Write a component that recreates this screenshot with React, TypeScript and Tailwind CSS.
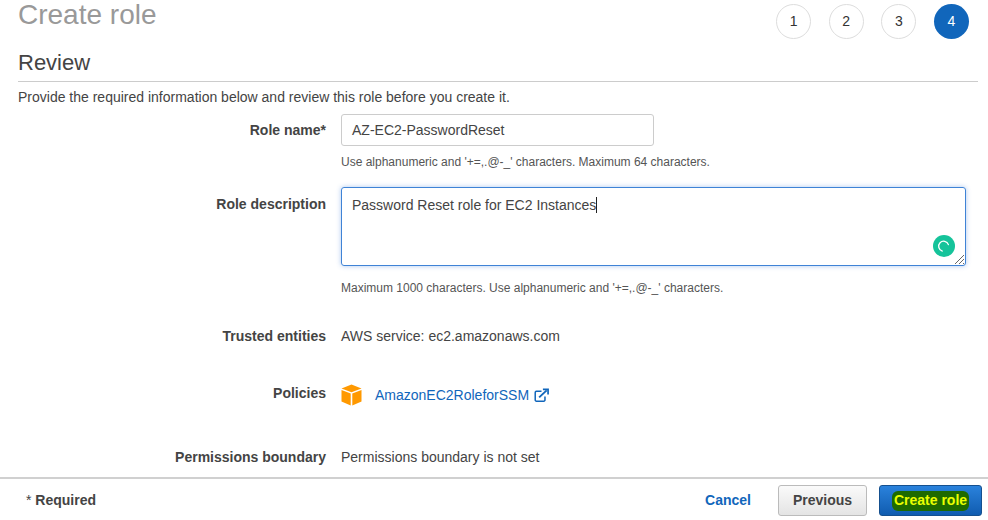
import React from 'react';

const Step = ({ n, active }: { n: number; active?: boolean }) => (
  <div
    className={
      active
        ? 'w-[35px] h-[35px] rounded-full bg-[#1166bb] text-white flex items-center justify-center text-[14px]'
        : 'w-[35px] h-[35px] rounded-full bg-white border border-[#dddddd] text-[#333333] flex items-center justify-center text-[14px]'
    }
  >
    {n}
  </div>
);

const Row = ({ label, className, labelClass, children }: { label: React.ReactNode; className?: string; labelClass?: string; children: React.ReactNode }) => (
  <div className={`flex items-start ${className ?? ''}`}>
    <div className={`w-[326px] shrink-0 text-right text-[14px] leading-[20px] font-bold text-[#444444] ${labelClass ?? ''}`}>{label}</div>
    <div className="ml-[15px] flex-1 min-w-0 text-[14px] leading-[20px] text-[#444444]">{children}</div>
  </div>
);

export default function App() {
  return (
    <div className="w-[988px] h-[520px] bg-white flex flex-col overflow-hidden font-['Liberation_Sans',Arial,sans-serif]">
      <main className="h-[477px] shrink-0 overflow-hidden">
        {/* title + wizard steps */}
        <div className="flex items-start justify-between pl-[18px] pr-[19px] pt-[4px] h-[46px]">
          <h1 className="text-[28px] leading-[28px] -mt-[3.3px] text-[#999999] font-normal">Create role</h1>
          <div className="flex gap-[17.67px]">
            <Step n={1} />
            <Step n={2} />
            <Step n={3} />
            <Step n={4} active />
          </div>
        </div>

        <div className="mx-[18px] mr-[10px] border-b border-[#cccccc] h-[36px] flex items-center">
          <h2 className="text-[22px] leading-[30px] -mt-[1px] text-[#444444] font-normal">Review</h2>
        </div>

        <p className="ml-[18px] mt-[6px] text-[14px] leading-[18px] text-[#444444]">
          Provide the required information below and review this role before you create it.
        </p>

        <Row label="Role name*" labelClass="pt-[6px]" className="mt-[8px]">
          <div className="w-[313px] h-[32px] border border-[#cccccc] rounded-[3px] pl-[10px] flex items-center text-[14px] text-[#444444]">
            AZ-EC2-PasswordReset
          </div>
          <div className="mt-[9px] text-[12px] leading-[14px] text-[#555555]">
            Use alphanumeric and '+=,.@-_' characters. Maximum 64 characters.
          </div>
        </Row>

        <Row label="Role description" labelClass="pt-[7px]" className="mt-[18px]">
          <div className="relative w-[625px] h-[79px] border border-[#3f83d6] rounded-[3px] shadow-[0_0_5px_rgba(70,130,220,0.45)] pl-[10px] pt-[7px] text-[14px] leading-[20px] text-[#444444]">
            Password Reset role for EC2 Instances
            <span className="inline-block w-px h-[16px] bg-[#222222] align-[-3px]" />
            <div className="absolute right-[10px] bottom-[8px] w-[22px] h-[22px] rounded-full bg-[#15c39a] flex items-center justify-center">
              <svg width="14" height="14" viewBox="0 0 14 14" fill="none">
                <path d="M3 10.500A5 5 0 1 1 11.500 8" stroke="#ffffff" strokeWidth="1.300" strokeLinecap="round" transform="rotate(-30 7 7)" />
              </svg>
            </div>
            <svg className="absolute right-0 bottom-0" width="11" height="11" viewBox="0 0 11 11" fill="none">
              <path d="M1 10L10 1M5 10L10 5M9 10L10 9" stroke="#666666" strokeWidth="1" />
            </svg>
          </div>
          <div className="mt-[15px] text-[12px] leading-[14px] text-[#555555]">
            Maximum 1000 characters. Use alphanumeric and '+=,.@-_' characters.
          </div>
        </Row>

        <Row label="Trusted entities" className="mt-[31px]">
          AWS service: ec2.amazonaws.com
        </Row>

        <Row label="Policies" className="mt-[37px]">
          <div className="flex items-center h-[24px]">
            <svg width="21" height="22" viewBox="0 0 21 22" className="shrink-0">
              <path d="M10.500 0.500L20.500 4.500L10.500 8.200L0.500 4.500Z" fill="#ff9900" />
              <path d="M0.500 6L9.700 9.500V21.500L0.500 17.500Z" fill="#ff9900" />
              <path d="M20.500 6L11.300 9.500V21.500L20.500 17.500Z" fill="#ff9900" />
            </svg>
            <a className="ml-[13px] text-[#1166bb]">AmazonEC2RoleforSSM</a>
            <svg className="ml-[5px]" width="15" height="15" viewBox="0 0 16 15" fill="none" stroke="#1166bb" strokeWidth="1.600">
              <path d="M8 3H2.500A1.200 1.200 0 0 0 1.300 4.200V12.300A1.200 1.200 0 0 0 2.500 13.500H10.500A1.200 1.200 0 0 0 11.700 12.300V8.500" />
              <path d="M5.500 9.500L13.500 2" strokeWidth="2" />
              <path d="M9.500 1H15V6.500" fill="none" strokeWidth="1.800" />
            </svg>
          </div>
        </Row>

        <Row label="Permissions boundary" className="mt-[40px]">
          Permissions boundary is not set
        </Row>
      </main>

      {/* sticky footer */}
      <footer className="flex-1 border-t-2 border-[#d0d0d0] flex items-center pl-[26px] pr-[6px] pt-[1px]">
        <div className="text-[14px] font-bold text-[#444444]">
          <span className="font-normal">*</span> Required
        </div>
        <div className="ml-auto flex items-center">
          <a className="text-[14px] font-bold text-[#1166bb] mr-[27px]">Cancel</a>
          <button className="w-[89px] h-[31px] rounded-[3px] border border-[#bbbbbb] bg-gradient-to-b from-[#fafafa] to-[#e4e4e4] text-[14px] font-bold text-[#444444] mr-[12px]">
            Previous
          </button>
          <button className="w-[103px] h-[31px] rounded-[3px] border border-[#15508f] bg-gradient-to-b from-[#2a82dc] to-[#105cb0] text-[14px] font-bold flex items-center justify-center">
            <span className="bg-[#1e6a00] rounded-[6px] text-[#eaff00] px-[2px] pt-[2px] pb-[3px] -mb-[2px] leading-[15px]">Create role</span>
          </button>
        </div>
      </footer>
    </div>
  );
}
